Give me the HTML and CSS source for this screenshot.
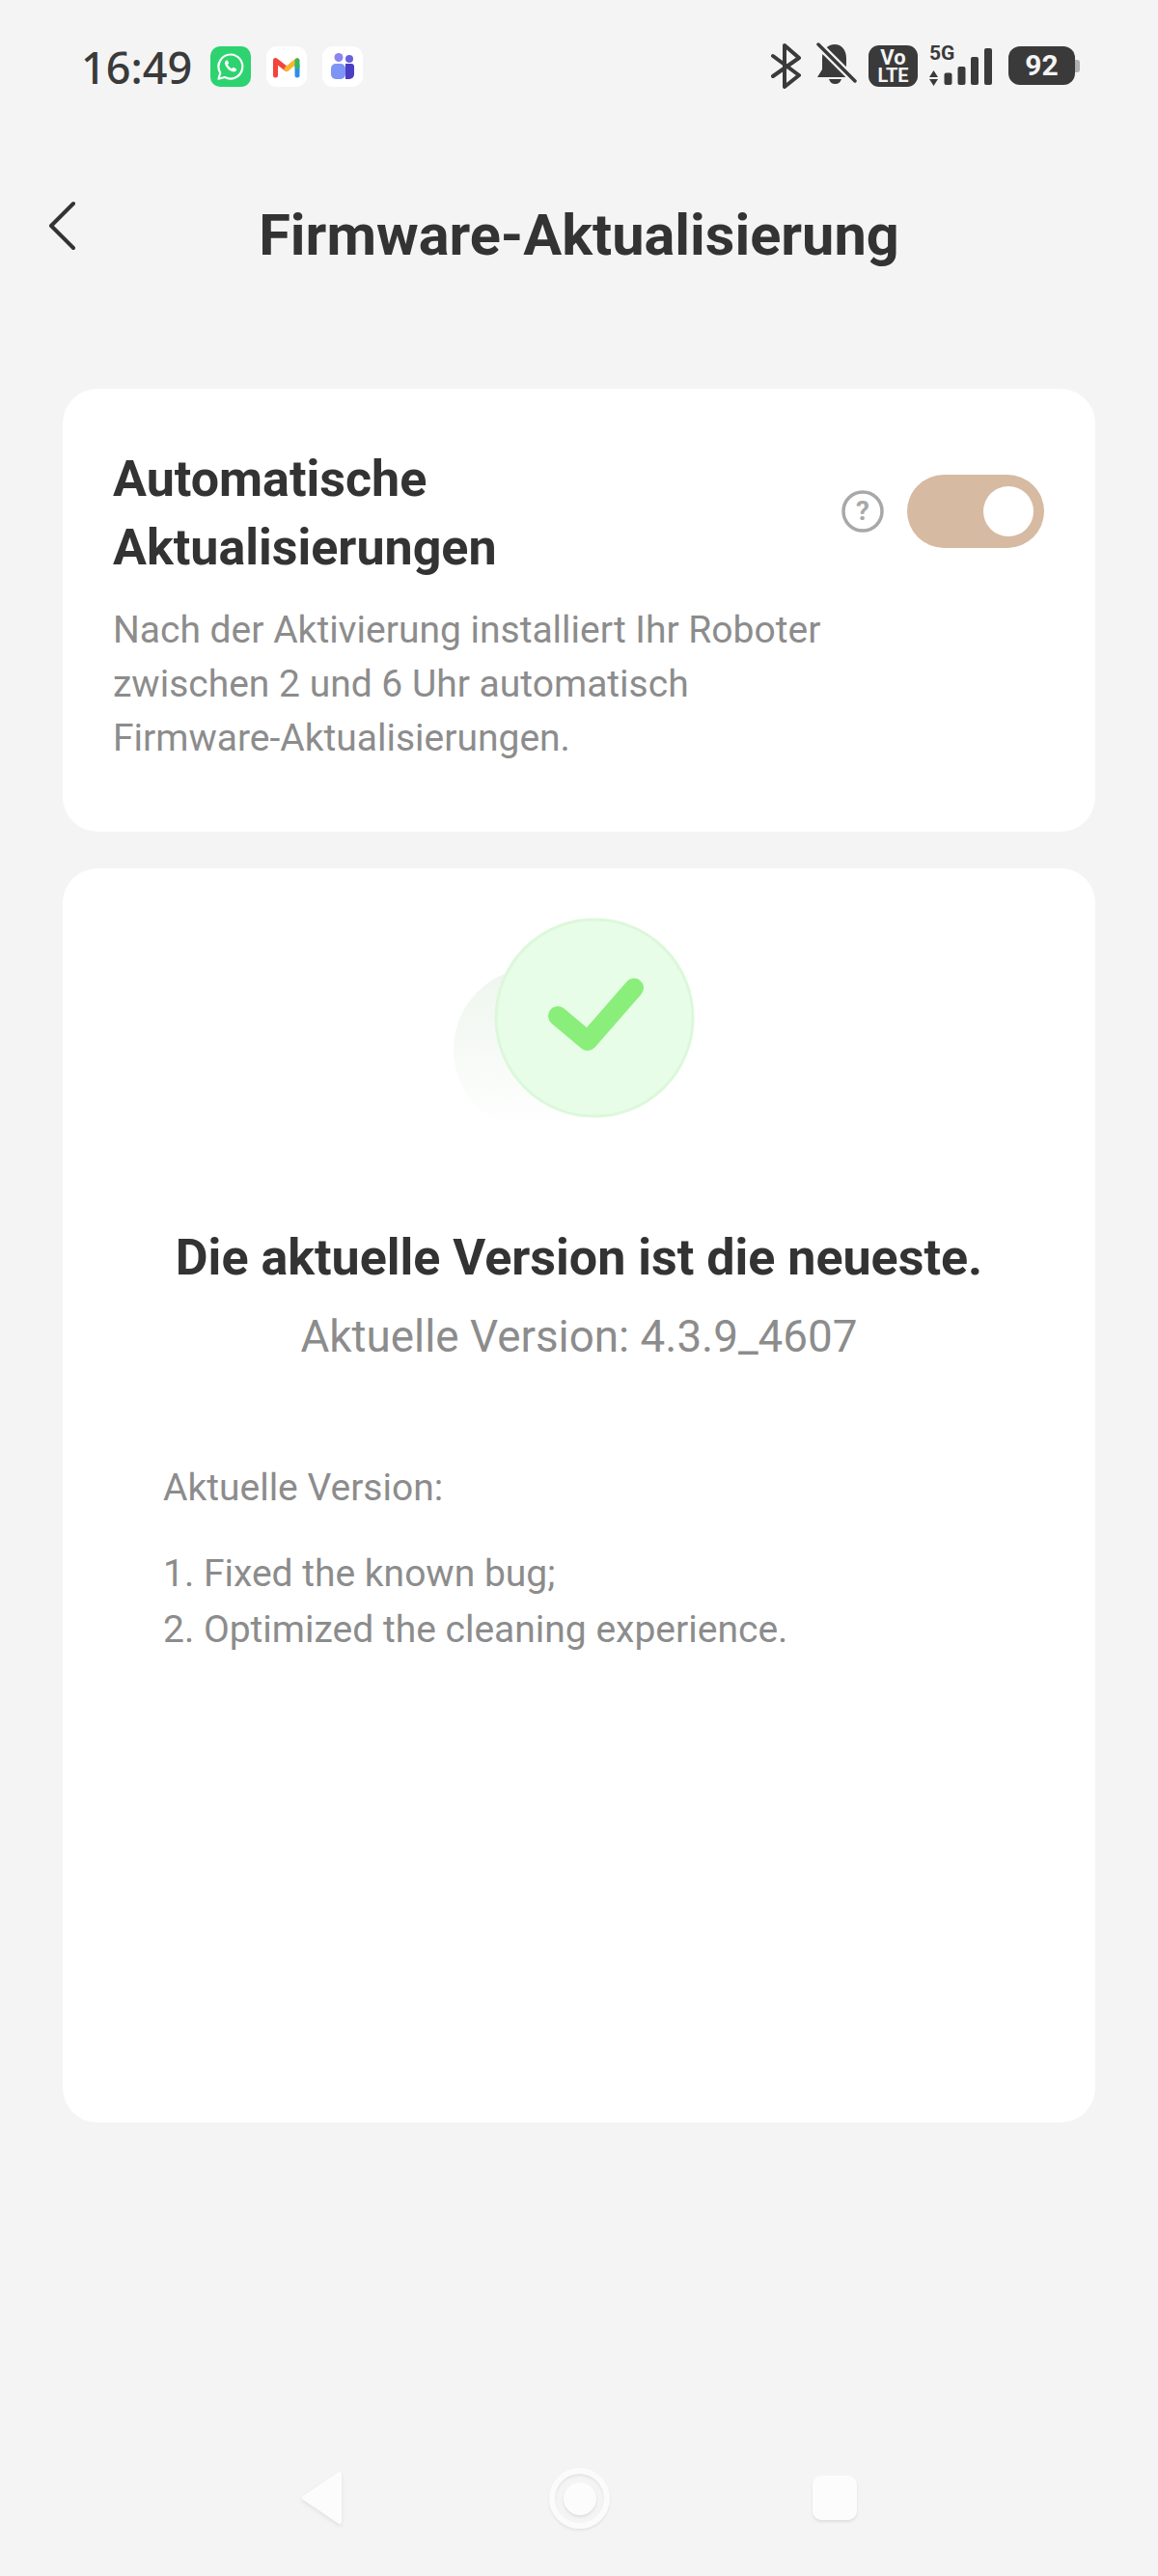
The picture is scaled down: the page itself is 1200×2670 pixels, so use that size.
FILE: index.html
```html
<!DOCTYPE html>
<html lang="de">
<head>
<meta charset="utf-8">
<title>Firmware-Aktualisierung</title>
<link rel="stylesheet" href="styles.css">
</head>
<body>
<div class="screen">
  <div class="status">
    <div class="status-left">
      <span class="time">16:49</span>
      <svg class="app" viewBox="0 0 42 42"><rect width="42" height="42" rx="10" fill="#2dd36f"/><path d="M21 8.500a12.500 12.500 0 0 0-10.700 19L8.500 33.700l6.400-1.700A12.500 12.500 0 1 0 21 8.500z" fill="none" stroke="#fff" stroke-width="2.200" stroke-linejoin="round"/><path d="M16.500 14.500c-1.500 1-2 2.800-1 5 1.300 3 3.800 5.300 6.800 6.500 2.200.8 4 .2 4.800-1.300l-.3-1.500-3-1.500-1.500 1.400c-1.800-.7-3.500-2.300-4.400-4.200l1.200-1.400-1.300-3.100z" fill="#fff"/></svg>
      <svg class="app" viewBox="0 0 42 42"><rect width="42" height="42" rx="11" fill="#fff"/><path d="M9.500 30V14.500L21 23.500" fill="none" stroke="#f4433c" stroke-width="5" stroke-linecap="round" stroke-linejoin="round"/><path d="M21 23.500l11-9" fill="none" stroke="#f8b62b" stroke-width="5" stroke-linecap="round"/><path d="M32 20v10" fill="none" stroke="#2c8fe8" stroke-width="5" stroke-linecap="round"/><path d="M32 15v6" fill="none" stroke="#35b565" stroke-width="5" stroke-linecap="round"/></svg>
      <svg class="app" viewBox="0 0 42 42"><rect width="42" height="42" rx="11" fill="#fff"/><circle cx="17" cy="11.500" r="4.500" fill="#8d84f2"/><circle cx="28" cy="13" r="4" fill="#6a5fe0"/><rect x="9" y="18" width="15" height="16" rx="5" fill="#7f95f5"/><path d="M24 18h6a3 3 0 0 1 3 3v8a5 5 0 0 1-5 5h-4z" fill="#4a3fc4"/></svg>
    </div>
    <div class="status-right">
      <svg class="i-bt" viewBox="0 0 32 47"><path d="M3 13l27 20-15 12V2l15 13L3 34" fill="none" stroke="#3a3a3a" stroke-width="4" stroke-linejoin="round" stroke-linecap="round"/></svg>
      <svg class="i-bell" viewBox="0 0 42 46"><path d="M19 2c7 0 12 6 12 14v11l3 9H1l5-8V16C6 8 12 2 19 2zM13 38h13c-1 3-3 5-6.500 5S14 41 13 38z" fill="#3a3a3a"/><path d="M1 1l40 40" stroke="#f4f4f4" stroke-width="8"/><path d="M2 2l38 38" stroke="#3a3a3a" stroke-width="3.500" stroke-linecap="round"/></svg>
      <span class="volte"><span class="vo">Vo</span><span>LTE</span></span>
      <span class="signal">
        <span class="fiveg">5G</span>
        <svg class="i-sig" viewBox="0 0 65 38"><path d="M0 30L4.500 23 9 30zM0 32h9l-4.500 7z" fill="#3a3a3a"/><rect x="15.500" y="25.500" width="8" height="12.500" rx="2" fill="#3a3a3a"/><rect x="29.500" y="19" width="8" height="19" rx="2" fill="#3a3a3a"/><rect x="43" y="9" width="8" height="29" rx="2" fill="#3a3a3a"/><rect x="57" y="0" width="8" height="38" rx="2" fill="#3a3a3a"/></svg>
      </span>
      <span class="battery"><span class="batt-body">92</span><span class="batt-tip"></span></span>
    </div>
  </div>

  <header class="topbar">
    <svg class="back" viewBox="0 0 30 54"><path d="M26 3L3 26l23 23" fill="none" stroke="#333" stroke-width="4" stroke-linecap="round" stroke-linejoin="round"/></svg>
    <h1>Firmware-Aktualisierung</h1>
  </header>

  <section class="card auto">
    <div class="auto-row">
      <h2>Automatische<br>Aktualisierungen</h2>
      <div class="auto-controls">
        <svg class="help" viewBox="0 0 44 44"><circle cx="22" cy="22" r="20" fill="none" stroke="#a8a8a8" stroke-width="3.500"/><text x="22" y="31" text-anchor="middle" class="help-q">?</text></svg>
        <span class="toggle"><span class="knob"></span></span>
      </div>
    </div>
    <p class="desc">Nach der Aktivierung installiert Ihr Roboter<br>zwischen 2 und 6 Uhr automatisch<br>Firmware-Aktualisierungen.</p>
  </section>

  <section class="card version">
    <div class="badge">
      <span class="shadow"></span>
      <svg class="tick-circle" viewBox="0 0 210 210"><circle cx="105" cy="105" r="102" fill="#e8fde8" stroke="#dcf8da" stroke-width="3"/><path d="M67 103l31 26 48-55" fill="none" stroke="#8aee7a" stroke-width="20" stroke-linecap="round" stroke-linejoin="round"/></svg>
    </div>
    <h3>Die aktuelle Version ist die neueste.</h3>
    <p class="current">Aktuelle Version: 4.3.9_4607</p>
    <div class="notes">
      <p class="notes-head">Aktuelle Version:</p>
      <p class="notes-list">1. Fixed the known bug;<br>2. Optimized the cleaning experience.</p>
    </div>
  </section>

  <nav class="navbar">
    <svg class="nav-back" viewBox="0 0 46 56"><path d="M41 3L4 28l37 25z" fill="#fcfcfc" stroke="#fcfcfc" stroke-width="4" stroke-linejoin="round"/></svg>
    <span class="nav-home"><span class="nav-home-dot"></span></span>
    <span class="nav-square"></span>
  </nav>
</div>
</body>
</html>
```
FILE: styles.css
```css
* { box-sizing: border-box; margin: 0; padding: 0; }
html, body { background: #f4f4f4; }
body { font-family: Roboto, "Liberation Sans", sans-serif; color: #333; }
.screen { width: 1200px; height: 2670px; display: flex; flex-direction: column; position: relative; overflow: hidden; }

.status { height: 136px; padding: 44px 81px 0 84px; display: flex; justify-content: space-between; align-items: flex-start; }
.status-left { display: flex; align-items: center; gap: 16px; height: 42px; margin-top: 4px; }
.time { font-family: "Noto Sans", sans-serif; font-size: 45px; font-weight: 500; color: #3a3a3a; margin-right: 3px; }
.app { width: 42px; height: 42px; display: block; }
.status-right { display: flex; align-items: flex-start; }
.i-bt { width: 32px; height: 47px; display: block; margin: 1px 16px 0 0; }
.i-bell { width: 42px; height: 46px; display: block; margin-right: 12px; }
.volte { width: 51px; height: 43px; background: #3a3a3a; border-radius: 11px; color: #f4f4f4; display: flex; flex-direction: column; align-items: center; justify-content: center; font-size: 20px; font-weight: 700; line-height: 19px; margin: 3px 12px 0 0; }
.vo { font-size: 22px; }
.signal { width: 65px; height: 42px; position: relative; margin: 3px 17px 0 0; }
.fiveg { position: absolute; left: 0; top: -3px; font-size: 21px; font-weight: 700; color: #3a3a3a; line-height: 22px; }
.i-sig { position: absolute; left: 0; top: 3px; width: 65px; height: 38px; display: block; overflow: visible; }
.battery { display: flex; align-items: center; margin-top: 4px; }
.batt-body { width: 69px; height: 40px; background: #3a3a3a; border-radius: 12px; color: #f4f4f4; font-size: 30px; font-weight: 700; text-align: center; line-height: 40px; }
.batt-tip { width: 5px; height: 13px; background: #b0b0b0; border-radius: 0 3px 3px 0; }

.topbar { height: 267px; position: relative; display: block; }
.back { position: absolute; left: 50px; top: 72px; width: 30px; height: 54px; }
.topbar h1 { font-size: 59.5px; font-weight: 700; text-align: center; line-height: 68px; padding-top: 74px; color: #333; }

.card { background: #fff; border-radius: 36px; margin: 0 65px; width: 1070px; }
.auto { height: 459px; padding: 58px 53px 0 52px; }
.auto-row { display: flex; justify-content: space-between; align-items: flex-start; }
.auto h2 { font-size: 52px; font-weight: 700; line-height: 71px; color: #333; }
.auto-controls { display: flex; align-items: center; gap: 24px; margin-top: 31px; }
.help { width: 44px; height: 44px; display: block; }
.help-q { font-family: Roboto, sans-serif; font-size: 28px; font-weight: 700; fill: #a8a8a8; }
.toggle { width: 142px; height: 76px; background: #d7baa2; border-radius: 38px; display: flex; align-items: center; justify-content: flex-end; padding-right: 11px; }
.knob { width: 52px; height: 52px; background: #fff; border-radius: 50%; display: block; }
.desc { font-size: 39px; line-height: 56px; color: #8c8c8c; margin-top: 22px; }

.version { margin-top: 38px; height: 1300px; padding-top: 50px; display: flex; flex-direction: column; align-items: center; }
.badge { width: 260px; height: 210px; position: relative; }
.shadow { position: absolute; left: 0; top: 53px; width: 170px; height: 170px; border-radius: 50%; background: linear-gradient(#eef5ee, #ffffff); }
.tick-circle { position: absolute; left: 41px; top: 0; width: 210px; height: 210px; display: block; }
.version h3 { font-size: 52px; font-weight: 700; line-height: 60px; margin-top: 114px; color: #333; }
.current { font-size: 45.8px; line-height: 56px; color: #8c8c8c; margin-top: 24px; }
.notes { width: 100%; padding: 0 104px; margin-top: 100px; color: #8c8c8c; font-size: 39px; }
.notes-head { line-height: 56px; }
.notes-list { line-height: 58px; margin-top: 32px; }

.navbar { position: absolute; left: 0; top: 2550px; width: 1200px; height: 80px; }
.nav-back { position: absolute; left: 311px; top: 11px; width: 46px; height: 56px; filter: drop-shadow(0 2px 2px rgba(0,0,0,.08)); }
.nav-home { position: absolute; left: 569px; top: 8px; width: 63px; height: 63px; border-radius: 50%; border: 6px solid #fbfbfb; box-shadow: 0 2px 3px rgba(0,0,0,.07), inset 0 2px 3px rgba(0,0,0,.07); display: flex; align-items: center; justify-content: center; }
.nav-home-dot { width: 34px; height: 34px; border-radius: 50%; background: #fcfcfc; box-shadow: 0 2px 3px rgba(0,0,0,.09); display: block; }
.nav-square { position: absolute; left: 842px; top: 16px; width: 46px; height: 46px; border-radius: 9px; background: #fcfcfc; box-shadow: 0 2px 3px rgba(0,0,0,.09); }
```
